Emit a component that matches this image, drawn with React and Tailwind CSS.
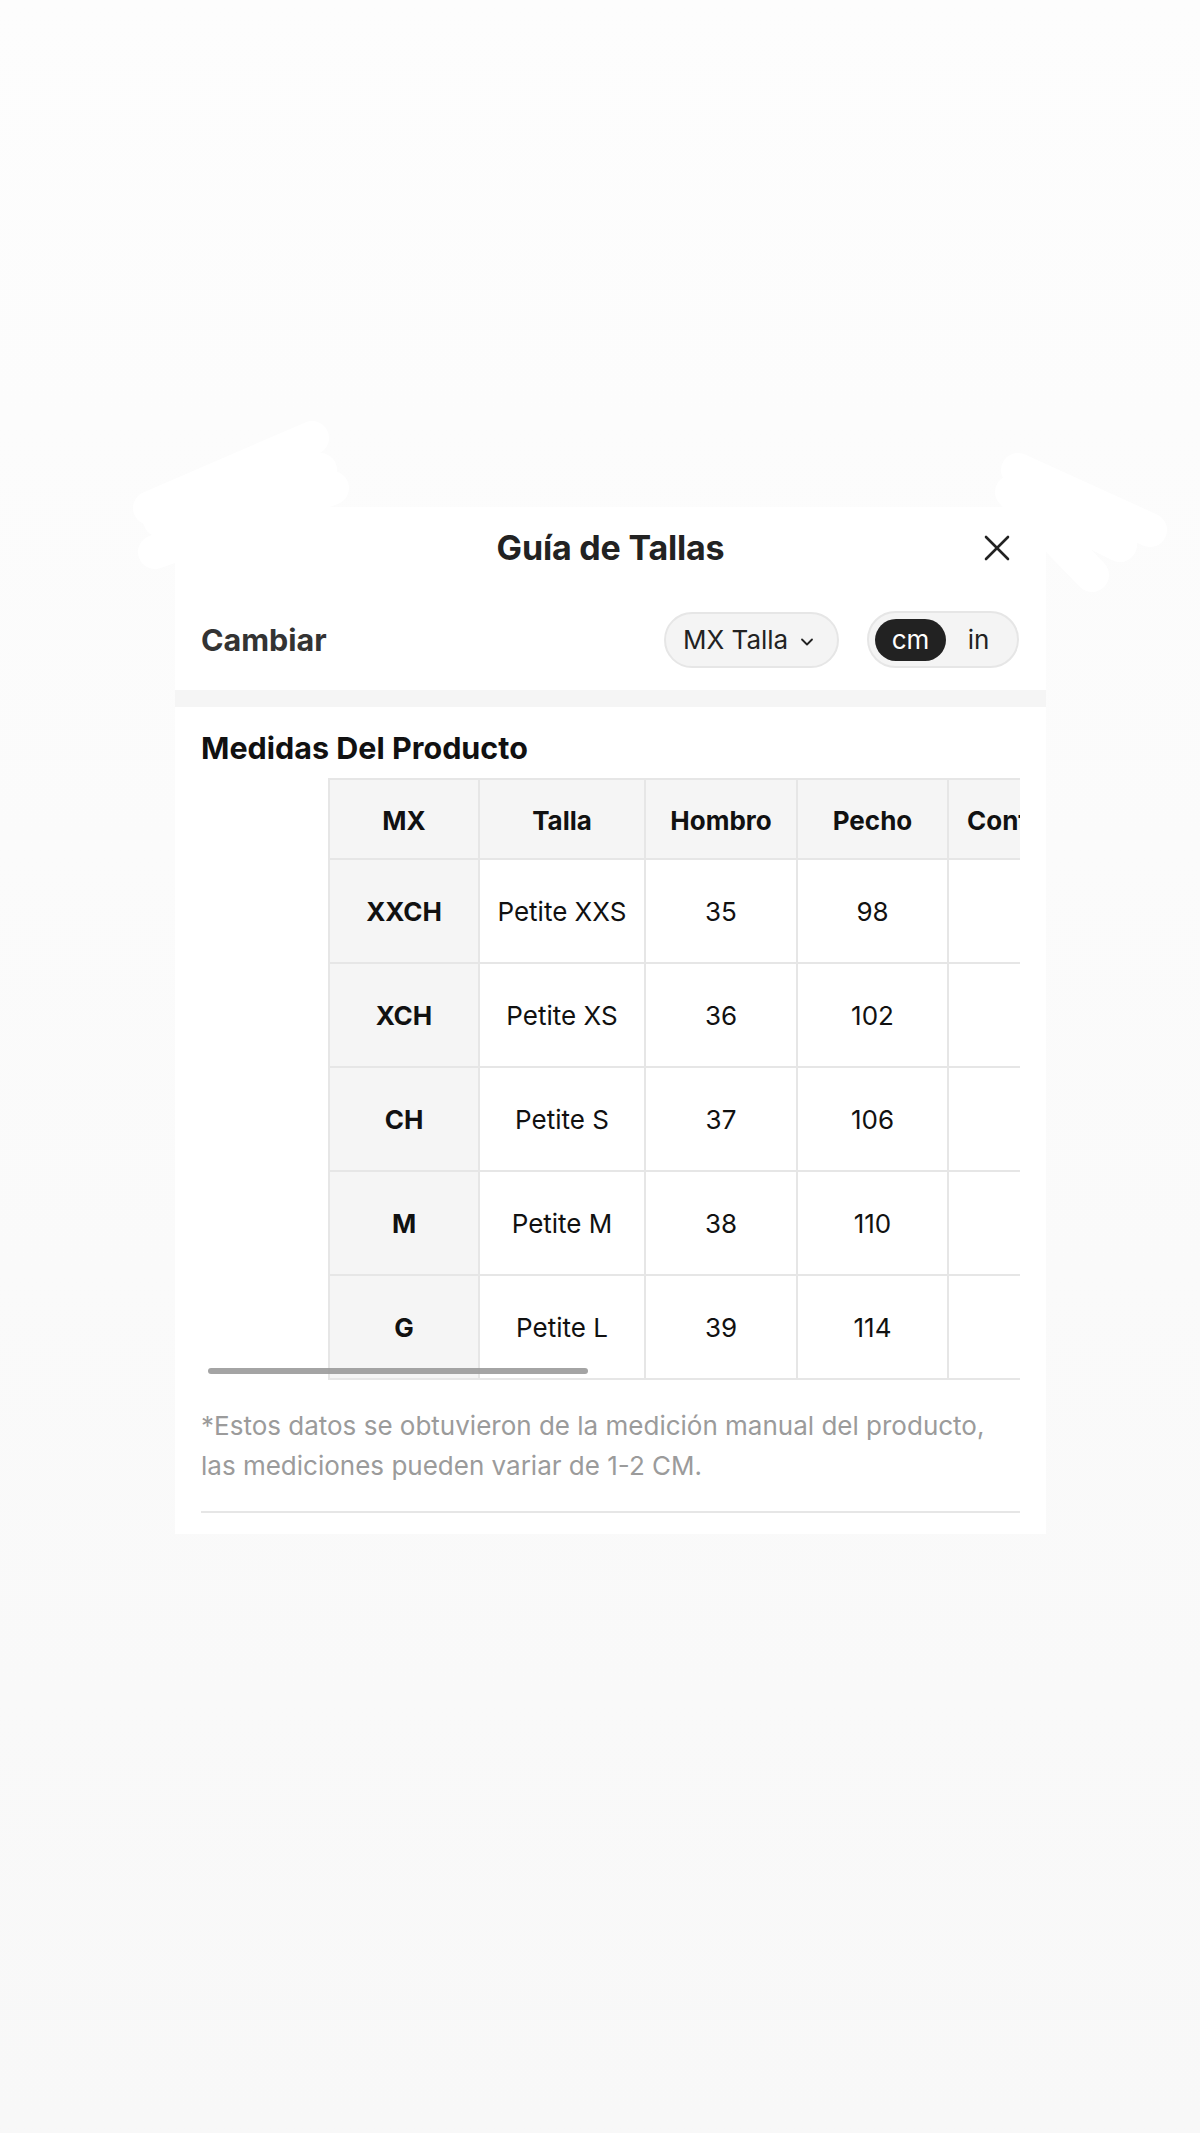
import React from "react";
import { ChevronDown } from "lucide-react";

const rows = [
  { mx: "XXCH", talla: "Petite XXS", hombro: "35", pecho: "98", contorno: "64" },
  { mx: "XCH", talla: "Petite XS", hombro: "36", pecho: "102", contorno: "65" },
  { mx: "CH", talla: "Petite S", hombro: "37", pecho: "106", contorno: "66" },
  { mx: "M", talla: "Petite M", hombro: "38", pecho: "110", contorno: "67" },
  { mx: "G", talla: "Petite L", hombro: "39", pecho: "114", contorno: "68" },
];

const Scribbles = () => (
  <>
    {/* white redaction marks over the top corners */}
    <svg className="absolute left-0 top-0 pointer-events-none" width="1200" height="620" viewBox="0 0 1200 620">
      <g stroke="#ffffff" strokeWidth="34" strokeLinecap="round" fill="none">
        <path d="M150 508 L312 438" />
        <path d="M155 552 L332 488" />
        <path d="M160 520 L320 470" />
        <path d="M1018 470 L1150 530" />
        <path d="M1012 492 L1092 575" />
        <path d="M1030 500 L1120 545" />
      </g>
    </svg>
  </>
);

const App = () => {
  return (
    <div
      className="relative min-h-[2133px] w-full bg-gradient-to-b from-[#fdfdfd] to-[#f8f8f8]"
      style={{ fontFamily: "Inter, 'Noto Sans', 'Liberation Sans', sans-serif" }}
    >
      <Scribbles />

      <div className="relative pt-[507px] pl-[175px]">
        <div className="w-[871px] bg-white">
          {/* Header */}
          <div className="relative flex h-[82px] items-center justify-center">
            <h1 className="text-[34px] font-bold leading-none text-[#222] tracking-[-0.2px]">Guía de Tallas</h1>
            <button className="absolute right-[36px] top-[28px] text-[#222]" aria-label="Cerrar">
              <svg width="26" height="26" viewBox="0 0 26 26" fill="none" stroke="currentColor" strokeWidth="2.6" strokeLinecap="round">
                <path d="M2 2 L24 24" />
                <path d="M24 2 L2 24" />
              </svg>
            </button>
          </div>

          {/* Cambiar row */}
          <div className="flex h-[101px] items-center justify-between pl-[26px] pr-[27px]">
            <span className="text-[30.5px] font-bold text-[#333]">Cambiar</span>
            <div className="flex items-center gap-[28px]">
              <button className="flex h-[56px] w-[175px] items-center justify-between rounded-full border-2 border-[#e6e6e6] bg-[#f4f4f4] pl-[17px] pr-[20px] text-[26px] text-[#222]">
                <span>MX Talla</span>
                <ChevronDown size={20} strokeWidth={2.2} className="mt-[4px]" />
              </button>
              <div className="flex h-[57px] w-[152px] items-center rounded-full border-2 border-[#e6e6e6] bg-[#f4f4f4] pl-[6px]">
                <span className="flex h-[42px] w-[71px] items-center justify-center rounded-full bg-[#222] text-[26px] text-white">cm</span>
                <span className="flex-1 pr-[6px] text-center text-[26px] text-[#222]">in</span>
              </div>
            </div>
          </div>

          {/* separator band */}
          <div className="h-[17px] bg-[#f5f5f5]" />

          {/* Product measurements */}
          <div className="px-[26px] pt-[23px] pb-[21px]">
            <h2 className="text-[30.5px] font-bold leading-[36px] text-[#111]">Medidas Del Producto</h2>

            <div className="relative mt-[12px]">
              <div className="overflow-hidden pl-[127px]">
                <table className="border-collapse text-[#111]">
                  <thead>
                    <tr className="h-[80px] bg-[#f5f5f5]">
                      <th className="w-[150px] min-w-[150px] border-2 border-[#e6e6e6] pt-[2px] text-[26px] font-bold">MX</th>
                      <th className="w-[166px] min-w-[166px] border-2 border-[#e6e6e6] pt-[2px] text-[26px] font-bold">Talla</th>
                      <th className="w-[152px] min-w-[152px] border-2 border-[#e6e6e6] pt-[2px] text-[26px] font-bold">Hombro</th>
                      <th className="w-[151px] min-w-[151px] border-2 border-[#e6e6e6] pt-[2px] text-[26px] font-bold">Pecho</th>
                      <th className="whitespace-nowrap border-2 border-[#e6e6e6] px-[18px] pt-[2px] text-left text-[26px] font-bold">Contorno de Cintura</th>
                    </tr>
                  </thead>
                  <tbody>
                    {rows.map((r) => (
                      <tr key={r.mx} className="h-[104px]">
                        <td className="border-2 border-[#e6e6e6] bg-[#f5f5f5] text-center text-[26px] font-bold">{r.mx}</td>
                        <td className="border-2 border-[#e6e6e6] text-center text-[26px]">{r.talla}</td>
                        <td className="border-2 border-[#e6e6e6] text-center text-[26px]">{r.hombro}</td>
                        <td className="border-2 border-[#e6e6e6] text-center text-[26px]">{r.pecho}</td>
                        <td className="border-2 border-[#e6e6e6] text-center text-[26px]">{r.contorno}</td>
                      </tr>
                    ))}
                  </tbody>
                </table>
              </div>
              {/* scroll indicator */}
              <div className="absolute bottom-[6px] left-[7px] h-[6px] w-[380px] rounded-full bg-[#9a9a9a]/90" />
            </div>

            <p className="mt-[26px] text-[26px] leading-[40px] text-[#9b9b9b]">
              *Estos datos se obtuvieron de la medición manual del producto,
              <br />
              las mediciones pueden variar de 1-2 CM.
            </p>

            <div className="mt-[25px] h-[2px] bg-[#e6e6e6]" />
          </div>
        </div>
      </div>
    </div>
  );
};

export default App;
